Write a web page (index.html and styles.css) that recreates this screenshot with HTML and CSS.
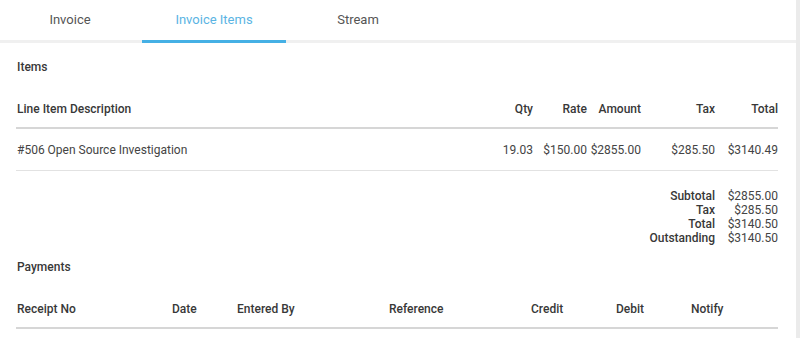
FILE: index.html
```html
<html>

<head>
    <link rel="stylesheet" href="styles.css">
</head>

<body>
    <div class="page">
        <nav class="tabs">
            <a class="tab">Invoice</a>
            <a class="tab active">Invoice Items</a>
            <a class="tab">Stream</a>
        </nav>

        <div class="content">
            <h3 class="section-title">Items</h3>
            <table class="items">
                <colgroup>
                    <col style="width: 464px">
                    <col style="width: 53px">
                    <col style="width: 54px">
                    <col style="width: 54px">
                    <col style="width: 74px">
                    <col style="width: 63px">
                </colgroup>
                <tr>
                    <th class="left">Line Item Description</th>
                    <th>Qty</th>
                    <th>Rate</th>
                    <th>Amount</th>
                    <th>Tax</th>
                    <th>Total</th>
                </tr>
                <tr>
                    <td class="left">#506 Open Source Investigation</td>
                    <td>19.03</td>
                    <td>$150.00</td>
                    <td>$2855.00</td>
                    <td>$285.50</td>
                    <td>$3140.49</td>
                </tr>
            </table>

            <div class="totals">
                <div class="total-row"><span class="total-label">Subtotal</span><span class="total-value">$2855.00</span></div>
                <div class="total-row"><span class="total-label">Tax</span><span class="total-value">$285.50</span></div>
                <div class="total-row"><span class="total-label">Total</span><span class="total-value">$3140.50</span></div>
                <div class="total-row"><span class="total-label">Outstanding</span><span class="total-value">$3140.50</span></div>
            </div>

            <h3 class="section-title payments-title">Payments</h3>
            <table class="payments">
                <colgroup>
                    <col style="width: 155px">
                    <col style="width: 65px">
                    <col style="width: 152px">
                    <col style="width: 142px">
                    <col style="width: 85px">
                    <col style="width: 75px">
                    <col style="width: 88px">
                </colgroup>
                <tr>
                    <th>Receipt No</th>
                    <th>Date</th>
                    <th>Entered By</th>
                    <th>Reference</th>
                    <th>Credit</th>
                    <th>Debit</th>
                    <th>Notify</th>
                </tr>
            </table>
        </div>
    </div>
</body>

</html>
```

FILE: styles.css
```css
body {
    margin: 0;
    background-color: #ffffff;
    font-family: Roboto, "Liberation Sans", sans-serif;
    color: #3a3a3a;
}

.page {
    height: 100vh;
    overflow: hidden;
    border-right: 4px solid #ebebeb;
}

.tabs {
    display: flex;
    height: 40px;
    border-bottom: 3px solid #f0f0f0;
}

.tab {
    width: 144px;
    margin-bottom: -3px;
    display: flex;
    justify-content: center;
    align-items: center;
    padding-bottom: 2px;
    font-size: 13px;
    color: #555555;
    border-bottom: 3px solid transparent;
}

.tab:first-child {
    margin-left: -2px;
}

.tab.active {
    color: #5ab4e3;
    border-bottom-color: #45b0e5;
}

.content {
    padding: 0 18px 0 16px;
}

.section-title {
    margin: 0;
    font-size: 12px;
    font-weight: 500;
    color: #383838;
    padding: 16px 1px 0 1px;
    line-height: 16px;
}

.payments-title {
    padding-top: 14px;
}

table {
    border-collapse: collapse;
    table-layout: fixed;
    width: 762px;
    font-size: 12px;
}

th {
    font-weight: 500;
    color: #383838;
    text-align: right;
    padding: 27px 0 11px 0;
    line-height: 14px;
    border-bottom: 2px solid #d6d6d6;
}

td {
    text-align: right;
    color: #444444;
    padding: 14px 0 13px 0;
    line-height: 14px;
    border-bottom: 1px solid #e2e2e2;
}

th.left,
td.left {
    text-align: left;
    padding-left: 1px;
}

.payments th {
    text-align: left;
    padding-left: 1px;
}

.totals {
    width: 762px;
    padding-top: 18px;
    font-size: 12px;
    line-height: 14px;
}

.total-row {
    display: flex;
    justify-content: flex-end;
}

.total-label {
    font-weight: 500;
    color: #383838;
}

.total-value {
    width: 63px;
    text-align: right;
    color: #444444;
}
```
